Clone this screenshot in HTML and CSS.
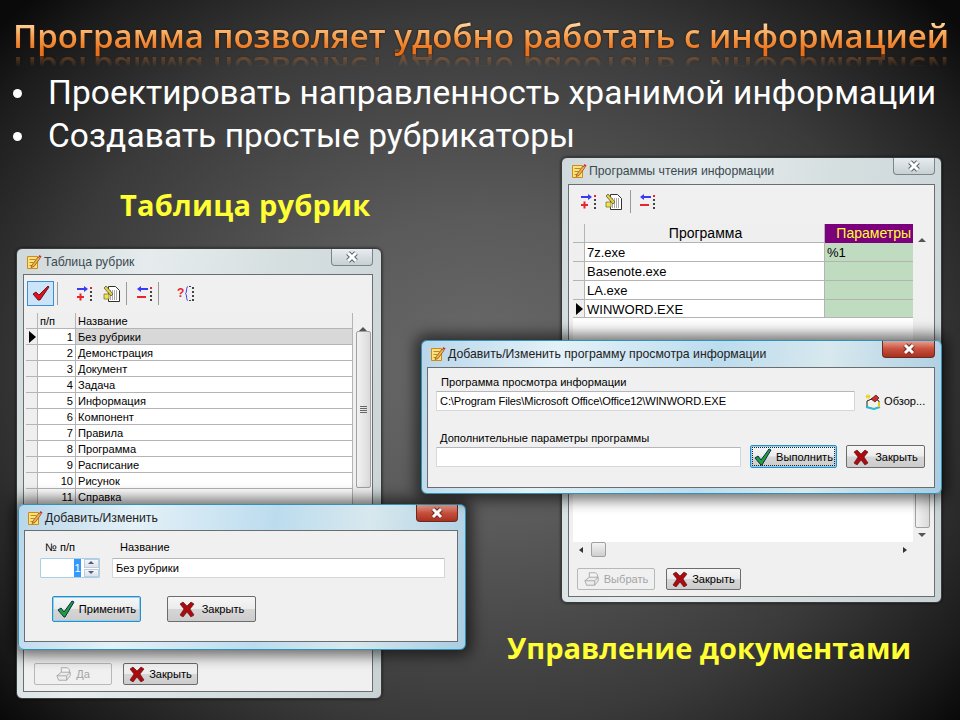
FILE: index.html
```html
<!doctype html>
<html>
<head>
<meta charset="utf-8">
<title>Программа позволяет удобно работать с информацией</title>
<link rel="stylesheet" href="styles.css">
</head>

<body>
<svg class="defs" width="0" height="0">
	<symbol id="i-note" viewBox="0 0 16 16">
		<path d="M1.500 2.500h10v12h-10z" fill="#fbe27a" stroke="#d08a1c"/>
		<path d="M3.500 5.500h6M3.500 8.500h4M3.500 11.500h4" stroke="#b98a2a"/>
		<path d="M6 11l6-8 2 1.500-6 8-3 1z" fill="#eeb04a" stroke="#8a4a10" stroke-width=".7"/>
		<path d="M12.500 2.500l1-1.500 2 1.500-1 1.500z" fill="#d8262c"/>
	</symbol>
	<symbol id="i-close" viewBox="0 0 16 12">
		<path d="M4 2l8 8M12 2l-8 8" stroke="currentColor" stroke-width="5"/>
		<path d="M4 2l8 8M12 2l-8 8" stroke="#fff" stroke-width="3"/>
	</symbol>
	<symbol id="i-add" viewBox="0 0 17 17">
		<path d="M1 4h8" stroke="#3a3af0" stroke-width="2"/>
		<path d="M8 1l4 3-4 3z" fill="#3a3af0"/>
		<path d="M1 12h7M4.500 8.500v7" stroke="#e8242c" stroke-width="2"/>
		<path d="M14 2h2v2h-2z" fill="#e8242c"/>
		<path d="M14 6h2v2h-2zM14 10h2v2h-2zM14 14h2v2h-2z" fill="#444"/>
	</symbol>
	<symbol id="i-del" viewBox="0 0 17 17">
		<path d="M4 4h8" stroke="#3a3af0" stroke-width="2"/>
		<path d="M5 1L1 4l4 3z" fill="#3a3af0"/>
		<path d="M1 12h9" stroke="#e8242c" stroke-width="2"/>
		<path d="M14 2h2v2h-2z" fill="#e8242c"/>
		<path d="M14 6h2v2h-2zM14 10h2v2h-2zM14 14h2v2h-2z" fill="#444"/>
	</symbol>
	<symbol id="i-edit" viewBox="0 0 17 17">
		<path d="M5.500 1.500h7l4 4v11h-11z" fill="#fff" stroke="#333"/>
		<path d="M7 6h8M7 8h8M7 10h8M7 12h8M7 14h8" stroke="#555" stroke-dasharray="1 1"/>
		<path d="M1 9h5v5H1z" fill="#f4e04a" stroke="#6a6a20" stroke-width=".7"/>
		<path d="M3 1l7 8-2 2-7-8z" fill="#e8cf3a" stroke="#444" stroke-width=".7"/>
	</symbol>
	<symbol id="i-find" viewBox="0 0 17 17">
		<path d="M10 1.500C8 1.500 9 8 7.500 8.500 9 9 8 15.500 10 15.500" fill="none" stroke="#3a3af0"/>
		<path d="M14 2h2v2h-2zM14 6h2v2h-2zM14 10h2v2h-2zM14 14h2v2h-2zM11 1h2v1h-2zM11 15h2v1h-2z" fill="#444"/>
	</symbol>
	<symbol id="i-redcheck" viewBox="0 0 18 16">
		<path d="M1 9l3-2 3 3 9-9 1 1-9 13H6z" fill="#e0101c" stroke="#50040a" stroke-width=".8"/>
	</symbol>
	<symbol id="i-ok" viewBox="0 0 18 18">
		<path d="M1 10l3-2 3 4 8-11 2 1-9 15H7z" fill="#20a030" stroke="#0a2a5a"/>
	</symbol>
	<symbol id="i-x" viewBox="0 0 16 16">
		<path d="M1 3l3-2 4 4 4-4 3 2-4 5 4 6-3 2-4-5-4 5-3-2 4-6z" fill="#a80c10" stroke="#5a0608" stroke-width=".6"/>
	</symbol>
	<symbol id="i-print" viewBox="0 0 18 18">
		<path d="M6 2h7l2 2v5H6z" fill="#f4f4f4" stroke="#a4a4a4"/>
		<path d="M1 11l5-4h10v4l-4 5H3z" fill="#ececec" stroke="#a4a4a4"/>
		<path d="M1 11h11v5M12 11l4-4" fill="none" stroke="#a4a4a4"/>
	</symbol>
	<symbol id="i-browse" viewBox="0 0 17 17">
		<path d="M3 8l7-3 5 3v6l-5 2-7-2z" fill="#f2f2e8" stroke="#222"/>
		<path d="M7 6l5-4 3 3-4 4z" fill="#d8262c" stroke="#222" stroke-width=".7"/>
		<path d="M2 14l8 2 6-2" fill="none" stroke="#2fb8d8" stroke-width="2"/>
		<path d="M15 9v5" stroke="#e8c81c" stroke-width="2"/>
		<path d="M4 1v5M1.500 3.500h5M2 2l4 3M6 2L2 5" stroke="#f2d21c"/>
	</symbol>
	<symbol id="i-arrow" viewBox="0 0 8 12">
		<path d="M1 0l7 6-7 6z" fill="#000"/>
	</symbol>
</svg>

<div class="slide">
	<h1 class="title">Программа позволяет удобно работать с информацией</h1>
	<ul class="points">
		<li>Проектировать направленность хранимой информации</li>
		<li>Создавать простые рубрикаторы</li>
	</ul>
	<div class="caption caption-left">Таблица рубрик</div>
	<div class="caption caption-right">Управление документами</div>

	<!-- таблица рубрик -->
	<div class="win win-rubrics">
		<div class="titlebar">
			<svg class="ico16"><use href="#i-note"/></svg>
			<span class="wintitle">Таблица рубрик</span>
			<span class="closebtn"><svg class="ico-close"><use href="#i-close"/></svg></span>
		</div>
		<div class="client">
			<div class="toolbar">
				<span class="toolbtn active"><svg class="ico-check"><use href="#i-redcheck"/></svg></span>
				<i class="sep sep-a"></i>
				<svg class="ico17 tool-add"><use href="#i-add"/></svg>
				<svg class="ico17"><use href="#i-edit"/></svg>
				<i class="sep sep-b"></i>
				<svg class="ico17"><use href="#i-del"/></svg>
				<i class="sep sep-c"></i>
				<span class="tool-find"><b>?</b><svg class="ico17"><use href="#i-find"/></svg></span>
			</div>
			<div class="gridwrap">
				<div class="grid grid-rubrics">
					<div class="cell head"></div><div class="cell head">п/п</div><div class="cell head">Название</div>
					<div class="cell ind"><svg class="arrow"><use href="#i-arrow"/></svg></div><div class="cell num selected">1</div><div class="cell selected">Без рубрики</div>
					<div class="cell ind"></div><div class="cell num">2</div><div class="cell">Демонстрация</div>
					<div class="cell ind"></div><div class="cell num">3</div><div class="cell">Документ</div>
					<div class="cell ind"></div><div class="cell num">4</div><div class="cell">Задача</div>
					<div class="cell ind"></div><div class="cell num">5</div><div class="cell">Информация</div>
					<div class="cell ind"></div><div class="cell num">6</div><div class="cell">Компонент</div>
					<div class="cell ind"></div><div class="cell num">7</div><div class="cell">Правила</div>
					<div class="cell ind"></div><div class="cell num">8</div><div class="cell">Программа</div>
					<div class="cell ind"></div><div class="cell num">9</div><div class="cell">Расписание</div>
					<div class="cell ind"></div><div class="cell num">10</div><div class="cell">Рисунок</div>
					<div class="cell ind"></div><div class="cell num">11</div><div class="cell">Справка</div>
				</div>
				<div class="vscroll">
					<span class="up"></span>
					<span class="thumb"><i class="grip"></i></span>
				</div>
			</div>
			<div class="btnrow">
				<span class="btn disabled btn-da"><svg class="ico16"><use href="#i-print"/></svg>Да</span>
				<span class="btn btn-close-sm"><svg class="ico16"><use href="#i-x"/></svg>Закрыть</span>
			</div>
		</div>
	</div>

	<!-- добавить рубрику -->
	<div class="win win-front win-add">
		<div class="titlebar">
			<svg class="ico16"><use href="#i-note"/></svg>
			<span class="wintitle">Добавить/Изменить</span>
			<span class="closebtn red"><svg class="ico-close"><use href="#i-close"/></svg></span>
		</div>
		<div class="client">
			<div class="add-labels">
				<span class="lbl-num">№ п/п</span>
				<span>Название</span>
			</div>
			<div class="add-fields">
				<div class="spin">
					<span class="field spin-val"><em>1</em></span>
					<span class="spin-btns"><i></i><i class="dn"></i></span>
				</div>
				<span class="field add-name">Без рубрики</span>
			</div>
			<div class="add-btns">
				<span class="btn btn-big focus"><svg class="ico18"><use href="#i-ok"/></svg>Применить</span>
				<span class="btn btn-big"><svg class="ico16"><use href="#i-x"/></svg>Закрыть</span>
			</div>
		</div>
	</div>

	<!-- программы чтения -->
	<div class="win win-programs">
		<div class="titlebar">
			<svg class="ico16"><use href="#i-note"/></svg>
			<span class="wintitle">Программы чтения информации</span>
			<span class="closebtn"><svg class="ico-close"><use href="#i-close"/></svg></span>
		</div>
		<div class="client">
			<div class="toolbar toolbar-prog">
				<svg class="ico17"><use href="#i-add"/></svg>
				<svg class="ico17"><use href="#i-edit"/></svg>
				<i class="sep"></i>
				<svg class="ico17"><use href="#i-del"/></svg>
			</div>
			<div class="gridwrap prog-wrap">
				<div class="prog-main">
					<div class="grid grid-prog">
						<div class="cell head"></div><div class="cell head center">Программа</div><div class="cell head param-head">Параметры</div>
						<div class="cell ind"></div><div class="cell">7z.exe</div><div class="cell param">%1</div>
						<div class="cell ind"></div><div class="cell">Basenote.exe</div><div class="cell param"></div>
						<div class="cell ind"></div><div class="cell">LA.exe</div><div class="cell param"></div>
						<div class="cell ind"><svg class="arrow"><use href="#i-arrow"/></svg></div><div class="cell">WINWORD.EXE</div><div class="cell param"></div>
					</div>
					<div class="hscroll">
						<span class="left"></span>
						<span class="hthumb"></span>
						<span class="right"></span>
					</div>
				</div>
				<div class="vscroll vscroll-prog">
					<span class="up"></span>
					<span class="thumb"></span>
					<span class="down"></span>
				</div>
			</div>
			<div class="btnrow btnrow-prog">
				<span class="btn disabled btn-pick"><svg class="ico16"><use href="#i-print"/></svg>Выбрать</span>
				<span class="btn btn-close-sm"><svg class="ico16"><use href="#i-x"/></svg>Закрыть</span>
			</div>
		</div>
	</div>

	<!-- добавить программу -->
	<div class="win win-front win-viewer">
		<div class="titlebar">
			<svg class="ico16"><use href="#i-note"/></svg>
			<span class="wintitle">Добавить/Изменить программу просмотра информации</span>
			<span class="closebtn red wide"><svg class="ico-close"><use href="#i-close"/></svg></span>
		</div>
		<div class="client">
			<div class="lbl lbl-first">Программа просмотра информации</div>
			<div class="viewer-row">
				<span class="field path">C:\Program Files\Microsoft Office\Office12\WINWORD.EXE</span>
				<span class="browse"><svg class="ico17"><use href="#i-browse"/></svg>Обзор...</span>
			</div>
			<div class="lbl lbl-second">Дополнительные параметры программы</div>
			<div class="viewer-row viewer-row2">
				<span class="field args"></span>
				<span class="btn btn-run focus dotted"><svg class="ico18"><use href="#i-ok"/></svg>Выполнить</span>
				<span class="btn btn-close-run"><svg class="ico16"><use href="#i-x"/></svg>Закрыть</span>
			</div>
		</div>
	</div>
</div>
</body>
</html>
```

FILE: styles.css
```css
* {
	box-sizing: border-box;
}
html, body {
	margin: 0;
	padding: 0;
	background: #000;
}
.defs {
	position: absolute;
}
.slide {
	width: 960px;
	height: 720px;
	position: relative;
	overflow: hidden;
	padding-top: 14px;
	background: radial-gradient(ellipse 640px 520px at 480px 370px, #6a6a6a 0%, #5a5a5a 30%, #3a3a3a 68%, #1c1c1c 90%, #0a0a0a 100%);
	font-family: "Open Sans", "Noto Sans", sans-serif;
}

/* заголовок и текст слайда */
.title {
	margin: 0 0 0 13px;
	width: 940px;
	font-size: 33px;
	line-height: 43px;
	font-weight: 600;
	white-space: nowrap;
	color: transparent;
	background: linear-gradient(#ffd9a8 20%, #f6a152 50%, #e8701a 85%);
	-webkit-background-clip: text;
	background-clip: text;
	-webkit-box-reflect: below -9px linear-gradient(transparent 56%, rgba(255, 255, 255, .35) 82%);
	filter: drop-shadow(0 0 1px #2a1400);
}
.points {
	list-style: none;
	margin: 0;
	padding: 14px 0 0 48px;
	color: #fff;
	font-family: Roboto, "Open Sans", sans-serif;
	font-size: 33.500px;
	line-height: 43px;
	letter-spacing: .06px;
	white-space: nowrap;
}
.points li {
	position: relative;
}
.points li:before {
	content: "";
	position: absolute;
	left: -35px;
	top: 18px;
	width: 9px;
	height: 9px;
	border-radius: 50%;
	background: #fff;
}
.caption {
	position: absolute;
	color: #ffff33;
	font-size: 29px;
	line-height: 36px;
	font-weight: 700;
	white-space: nowrap;
}
.caption-left {
	left: 120px;
	top: 187px;
	letter-spacing: .25px;
}
.caption-right {
	left: 507px;
	top: 630px;
}

/* окна */
.win {
	position: absolute;
	display: flex;
	flex-direction: column;
	border-radius: 6px;
	padding: 0 6px 5px;
	background: linear-gradient(100deg, #cfd8da 0%, #e6ecee 30%, #d6dfe0 60%, #c9d3d6 100%);
	border: 1px solid #3a3a3a;
	box-shadow: 0 0 3px rgba(0, 0, 0, .7);
	font-family: "Liberation Sans", sans-serif;
	font-size: 11.100px;
	color: #000;
}
.win-front {
	background: linear-gradient(100deg, #b8d6ea 0%, #e4f1f8 25%, #bcdcee 55%, #d8e8ee 75%, #a8cde2 100%);
	border: 1px solid #2f93b8;
	box-shadow: 0 0 14px 6px rgba(0, 0, 0, .55);
}
.win-rubrics {
	left: 16px;
	top: 248px;
	width: 366px;
	height: 451px;
	padding: 0 8px 6px 6px;
}
.win-add {
	left: 18px;
	top: 504px;
	width: 448px;
	height: 146px;
	padding: 0 7px 7px 5px;
}
.win-programs {
	left: 561px;
	top: 157px;
	width: 381px;
	height: 446px;
}
.win-viewer {
	left: 421px;
	top: 340px;
	width: 521px;
	height: 154px;
	padding-left: 5px;
}
.titlebar {
	height: 26px;
	flex: none;
	display: flex;
	align-items: center;
	gap: 2px;
	padding-left: 3px;
	position: relative;
}
.win-rubrics .titlebar, .win-add .titlebar {
	height: 25px;
}
.wintitle {
	font-size: 12.250px;
	color: #222;
	white-space: nowrap;
}
.win-programs .wintitle, .win-rubrics .wintitle {
	color: #3c4a50;
}
.closebtn {
	position: absolute;
	right: 0;
	top: 0;
	width: 42px;
	height: 17px;
	border: 1px solid #7c8488;
	border-top: 0;
	border-radius: 0 0 4px 4px;
	background: linear-gradient(#e6ecef, #c8d0d4);
	color: #59656a;
	display: flex;
	align-items: center;
	justify-content: center;
}
.closebtn.red {
	border-color: #6a2a22;
	background: linear-gradient(#e8a090, #c8503c 50%, #a83020);
	color: #7a2a20;
}
.closebtn.wide {
	width: 53px;
}
.ico-close {
	width: 16px;
	height: 12px;
}
.client {
	flex: 1;
	background: #f0f0f0;
	border: 1px solid #6a6e70;
	position: relative;
}
.ico16 {
	width: 16px;
	height: 16px;
	flex: none;
}
.ico17 {
	width: 17px;
	height: 17px;
	flex: none;
}
.ico18 {
	width: 18px;
	height: 18px;
	flex: none;
}

/* панели */
.toolbar {
	display: flex;
	align-items: center;
	height: 26px;
	margin: 5px 0 0 3px;
}
.toolbtn {
	width: 27px;
	height: 25px;
	display: flex;
	align-items: center;
	justify-content: center;
}
.toolbtn.active {
	background: #cce4f8;
	border: 1px solid #3a8edc;
}
.ico-check {
	width: 18px;
	height: 16px;
}
.sep {
	width: 1px;
	height: 23px;
	background: #9a9a9a;
}
.sep-a {
	margin: 0 18px 0 3px;
}
.tool-add {
	margin-right: 10px;
}
.sep-b {
	margin: 0 9px 0 6px;
}
.sep-c {
	margin: 0 18px 0 5px;
}
.tool-find {
	display: flex;
	align-items: center;
}
.tool-find b {
	color: #e8242c;
	font-size: 12px;
	margin-right: -6px;
}
.toolbar-prog {
	margin: 3px 0 0 11px;
	gap: 8px;
}

/* сетки */
.gridwrap {
	display: flex;
	margin: 7px 0 0 2px;
}
.grid {
	display: grid;
	flex: none;
	background: #fff;
}
.grid-rubrics {
	width: 327px;
	grid-template-columns: 12px 38px 277px;
	grid-auto-rows: 16px;
	height: 192px;
	overflow: hidden;
}
.cell {
	border-right: 1px solid #b4b4b4;
	border-bottom: 1px solid #b4b4b4;
	padding: 1px 0 0 2px;
	line-height: 14px;
	white-space: nowrap;
	overflow: hidden;
}
.cell.head, .cell.ind {
	background: #efefef;
}
.cell.ind {
	padding: 0;
	display: flex;
	align-items: center;
	justify-content: center;
}
.cell.num {
	text-align: right;
	padding-right: 2px;
}
.cell.selected {
	background: #d8d8d8;
}
.cell.selected.num {
	background: #fff;
}
.cell.center {
	text-align: center;
}
.arrow {
	width: 8px;
	height: 12px;
}
.vscroll {
	width: 16px;
	margin-left: 2px;
	display: flex;
	flex-direction: column;
	align-items: center;
}
.vscroll .up {
	height: 18px;
	flex: none;
	border: 4px solid transparent;
	border-top-width: 5px;
	border-bottom: 4px solid #555;
	width: 8px;
}
.vscroll .thumb {
	width: 15px;
	height: 157px;
	border: 1px solid #a0a0a0;
	border-radius: 2px;
	background: linear-gradient(90deg, #f2f2f2, #dadada);
	display: flex;
	align-items: center;
	justify-content: center;
}
.grip {
	width: 7px;
	height: 7px;
	background: repeating-linear-gradient(#666 0 1px, transparent 1px 2px);
}
.btnrow {
	display: flex;
	position: absolute;
	left: 10px;
	bottom: 6px;
	gap: 11px;
}
.btnrow-prog {
	left: 8px;
}

/* кнопки и поля */
.btn {
	display: flex;
	align-items: center;
	justify-content: center;
	gap: 4px;
	border: 1px solid #6c6c6c;
	border-radius: 2px;
	background: linear-gradient(#f6f6f6 0%, #ececec 48%, #d6d6d6 52%, #cccccc 100%);
	white-space: nowrap;
}
.btn.disabled {
	border-color: #b8b8b8;
	background: #f0f0f0;
	color: #a4a4a4;
}
.btn-da, .btn-pick {
	width: 78px;
	height: 22px;
}
.btn-close-sm {
	width: 75px;
	height: 22px;
}
.btn-big {
	width: 89px;
	height: 26px;
}
.btn-big + .btn-big {
	gap: 7px;
}
.btn.focus {
	border-color: #2a8fc8;
	box-shadow: inset 0 0 0 1px #8fd0f0;
}
.btn.dotted {
	outline: 1px dotted #222;
	outline-offset: -3px;
}
.field {
	background: #fff;
	border: 1px solid #d4d8dc;
	border-top-color: #b4b8bc;
	border-radius: 1px;
	height: 20px;
	line-height: 18px;
	padding-left: 3px;
	white-space: nowrap;
	display: block;
}

/* диалог рубрики */
.add-labels {
	display: flex;
	padding: 9px 0 0 20px;
	line-height: 14px;
}
.lbl-num {
	width: 75px;
}
.add-fields {
	display: flex;
	margin: 4px 0 0 15px;
}
.spin {
	width: 60px;
	height: 20px;
	display: flex;
	margin-right: 12px;
	border: 1px solid #a8cfe8;
	border-radius: 1px;
	background: #fff;
}
.spin-val {
	flex: 1;
	border: 0;
	height: 18px;
	padding: 0 3px 0 0;
	text-align: right;
}
.spin-val em {
	font-style: normal;
	display: inline-block;
	background: #3399ff;
	color: #fff;
	width: 7px;
	text-align: center;
}
.spin-btns {
	width: 15px;
	display: flex;
	flex-direction: column;
	gap: 1px;
	flex: none;
}
.spin-btns i {
	flex: 1;
	border: 1px solid #c0ccd8;
	background: linear-gradient(#f4f6f8, #dde2e8);
	position: relative;
}
.spin-btns i:after {
	content: "";
	position: absolute;
	left: 3px;
	top: 1px;
	border: 3px solid transparent;
	border-top: 0;
	border-bottom: 3px solid #4a5a90;
}
.spin-btns i.dn:after {
	border-bottom: 0;
	border-top: 3px solid #4a5a90;
}
.add-name {
	width: 333px;
}
.add-btns {
	display: flex;
	gap: 26px;
	margin: 18px 0 0 27px;
}

/* окно программ */
.prog-wrap {
	margin: 10px 0 0 4px;
}
.prog-main {
	width: 340px;
	background: #fff;
	height: 333px;
	display: flex;
	flex-direction: column;
	justify-content: space-between;
}
.grid-prog {
	grid-template-columns: 12px 240px 88px;
	grid-template-rows: 19px 19px 19px 19px 18px;
	font-size: 13px;
}
.grid-prog .cell {
	line-height: 17px;
}
.grid-prog .cell.head {
	font-size: 14px;
}
.cell.param-head {
	background: #7c007c !important;
	color: #ffff33;
	text-align: right;
	padding-right: 2px;
	border: 0;
}
.cell.param {
	background: #c0dcc0;
	border-right: 0;
	padding-left: 2px;
}
.hscroll {
	height: 15px;
	background: #f0f0f0;
	display: flex;
	align-items: center;
	padding: 0 6px 0 6px;
}
.hscroll .left {
	border: 3px solid transparent;
	border-right: 4px solid #333;
	border-left: 0;
	margin-right: 8px;
}
.hthumb {
	width: 15px;
	height: 15px;
	border: 1px solid #a0a0a0;
	border-radius: 2px;
	background: linear-gradient(#f2f2f2, #cfcfcf);
}
.hscroll .right {
	margin-left: auto;
	border: 3px solid transparent;
	border-left: 4px solid #333;
	border-right: 0;
}
.vscroll-prog {
	height: 333px;
	background: #f0f0f0;
	margin-left: 1px;
}
.vscroll-prog .thumb {
	flex: 1;
	height: auto;
	margin: 100px 0 5px;
}
.vscroll-prog .down {
	height: 16px;
	flex: none;
	width: 8px;
	border: 4px solid transparent;
	border-bottom: 0;
	border-top: 4px solid #555;
	margin-bottom: 8px;
}

/* диалог программы */
.lbl {
	line-height: 14px;
	white-space: nowrap;
}
.lbl-first {
	padding: 7px 0 2px 13px;
}
.lbl-second {
	padding: 20px 0 0 12px;
}
.viewer-row {
	display: flex;
	align-items: center;
	margin: 0 0 0 8px;
}
.viewer-row2 {
	align-items: flex-start;
}
.path {
	width: 419px;
	letter-spacing: -.12px;
}
.browse {
	display: flex;
	align-items: center;
	gap: 3px;
	margin-left: 9px;
	white-space: nowrap;
}
.args {
	width: 305px;
	margin-top: 2px;
}
.btn-run {
	width: 87px;
	height: 23px;
	margin-left: 9px;
}
.btn-close-run {
	width: 79px;
	height: 23px;
	margin-left: 9px;
	gap: 6px;
}
```
